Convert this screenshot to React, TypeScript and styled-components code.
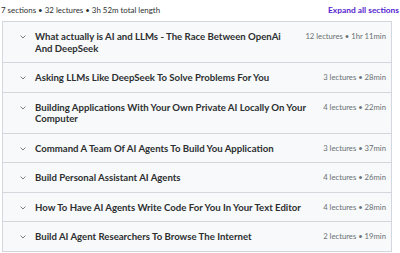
import React from 'react'
import styled, { createGlobalStyle } from 'styled-components'

const GlobalStyle = createGlobalStyle`
  body {
    margin: 0;
    background: #ffffff;
    font-family: Lato, "Noto Sans", sans-serif;
    color: #2d2f31;
  }
`

const sections = [
  { title: 'What actually is AI and LLMs - The Race Between OpenAi And DeepSeek', meta: '12 lectures • 1hr 11min' },
  { title: 'Asking LLMs Like DeepSeek To Solve Problems For You', meta: '3 lectures • 28min' },
  { title: 'Building Applications With Your Own Private AI Locally On Your Computer', meta: '4 lectures • 22min' },
  { title: 'Command A Team Of AI Agents To Build You Application', meta: '3 lectures • 37min' },
  { title: 'Build Personal Assistant AI Agents', meta: '4 lectures • 26min' },
  { title: 'How To Have AI Agents Write Code For You In Your Text Editor', meta: '4 lectures • 28min' },
  { title: 'Build AI Agent Researchers To Browse The Internet', meta: '2 lectures • 19min' },
]

export default function App() {
  return (
    <Page>
      <GlobalStyle />
      <Header>
        <Summary>7 sections • 32 lectures • 3h 52m total length</Summary>
        <ExpandAll>Expand all sections</ExpandAll>
      </Header>
      <Panel>
        {sections.map((s) => (
          <Row key={s.title}>
            <Chevron viewBox="0 0 6 4" width="6" height="4">
              <path d="M0.6 0.6 L3 3 L5.4 0.6" fill="none" stroke="#6a6f73" strokeWidth="0.9" />
            </Chevron>
            <Title>{s.title}</Title>
            <Meta>{s.meta}</Meta>
          </Row>
        ))}
      </Panel>
    </Page>
  )
}

const Page = styled.div`
  width: 400px;
  height: 253px;
  padding: 3px 2px 0 2px;
  box-sizing: border-box;
`

const Header = styled.div`
  display: flex;
  justify-content: space-between;
  align-items: center;
  height: 13px;
  margin-bottom: 5px;
  margin-right: -1px;
`

const Summary = styled.span`
  font-size: 7.9px;
  color: #2d2f31;
  margin-left: -1px;
`

const ExpandAll = styled.span`
  font-size: 8.4px;
  font-weight: 700;
  color: #5624d0;
`

const Panel = styled.div`
  width: 388px;
  border: 1px solid #d1d7dc;
  border-bottom: none;
`

const Row = styled.div`
  display: flex;
  align-items: flex-start;
  background: #f7f9fa;
  border-bottom: 1px solid #d1d7dc;
  padding: 9px 5px 8px 17px;
`

const Chevron = styled.svg`
  flex: none;
  margin-top: 4px;
  margin-right: 9px;
`

const Title = styled.div`
  flex: 1;
  font-size: 9.6px;
  line-height: 11.5px;
  font-weight: 700;
  color: #2d2f31;
  padding-right: 14px;
`

const Meta = styled.div`
  flex: none;
  font-size: 7.7px;
  line-height: 11.5px;
  color: #6a6f73;
`
